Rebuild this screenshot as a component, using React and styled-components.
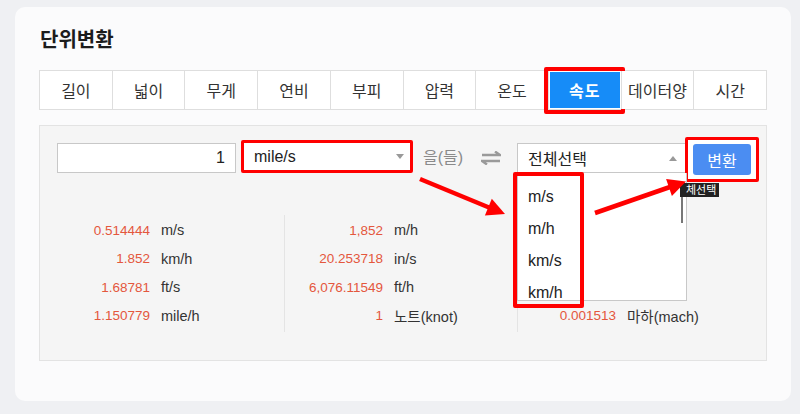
import styled, { createGlobalStyle } from "styled-components";

const tabs = ["길이", "넓이", "무게", "연비", "부피", "압력", "온도", "속도", "데이터양", "시간"];

// the third column's first rows sit under the open dropdown
const results = [
  [
    ["0.514444", "m/s"],
    ["1.852", "km/h"],
    ["1.68781", "ft/s"],
    ["1.150779", "mile/h"],
  ],
  [
    ["1,852", "m/h"],
    ["20.253718", "in/s"],
    ["6,076.11549", "ft/h"],
    ["1", "노트(knot)"],
  ],
  [
    ["", ""],
    ["", " "],
    ["", "  "],
    ["0.001513", "마하(mach)"],
  ],
];

const options = ["m/s", "m/h", "km/s", "km/h"];

const App = () => {
  return (
    <Page>
      <GlobalStyle />
      <Card>
        <Title>단위변환</Title>
        <TabRow>
          {tabs.map((t) => (
            <Tab key={t} $active={t === "속도"}>{t}</Tab>
          ))}
        </TabRow>

        <Panel>
          <ControlRow>
            <NumberInput readOnly value="1" />
            <SelectMark>
              <SelectText>mile/s</SelectText>
              <Caret />
            </SelectMark>
            <Josa>을(들)</Josa>
            <SwapIcon width="20" height="14" viewBox="0 0 20 14">
              <path d="M1 4 H19 L14 0.5" fill="none" stroke="#9a9a9a" strokeWidth="2.4" />
              <path d="M19 10 H1 L6 13.5" fill="none" stroke="#9a9a9a" strokeWidth="2.4" />
            </SwapIcon>
            <DropWrap>
              <TargetSelect>
                <SelectText>전체선택</SelectText>
                <Caret $up />
              </TargetSelect>
              <DropList>
                {options.map((o) => (
                  <DropItem key={o}>{o}</DropItem>
                ))}
                <ScrollThumb />
              </DropList>
              <ListMark />
              <Tip>체선택</Tip>
            </DropWrap>
            <ButtonMark>
              <ConvertButton>변환</ConvertButton>
            </ButtonMark>
          </ControlRow>

          <Results>
            {results.map((col, i) => (
              <Column key={i} $first={i === 0}>
                {col.map(([v, u]) => (
                  <ResultRow key={u}>
                    <Value>{v}</Value>
                    <Unit>{u}</Unit>
                  </ResultRow>
                ))}
              </Column>
            ))}
          </Results>

          <Arrows width="728" height="237" viewBox="0 0 728 237">
            <line x1="381" y1="54" x2="450" y2="82.5" stroke="#f00" strokeWidth="4.5" />
            <polygon points="466,89 445.9,90.5 452.8,73.8" fill="#f00" />
            <line x1="556" y1="88" x2="631" y2="62" stroke="#f00" strokeWidth="4.5" />
            <polygon points="647,56.5 632.9,70.9 627.1,53.9" fill="#f00" />
          </Arrows>
        </Panel>
      </Card>
    </Page>
  );
};

export default App;

const GlobalStyle = createGlobalStyle`
  body {
    margin: 0;
    background: #eff0f3;
    font-family: "Liberation Sans", "Noto Sans CJK KR", sans-serif;
  }
`;

const Page = styled.div`
  padding: 7px 0 13px 15px;
`;

const Card = styled.div`
  width: 776px;
  box-sizing: border-box;
  background: #fbfbfc;
  border-radius: 10px;
  padding: 19px 24px 40px;
`;

const Title = styled.h1`
  margin: 0;
  font-size: 20px;
  line-height: 28px;
  font-weight: bold;
  color: #1c1c1c;
  padding-left: 1px;
`;

const TabRow = styled.div`
  display: flex;
  margin-top: 16px;
  height: 40px;
  box-sizing: border-box;
  border: 1px solid #dedede;
  border-left: none;
  background: #fff;
`;

const Tab = styled.div`
  flex: 1;
  display: flex;
  align-items: center;
  justify-content: center;
  border-left: 1px solid #dedede;
  font-size: 16px;
  color: ${({ $active }) => ($active ? "#fff" : "#333")};
  font-weight: ${({ $active }) => ($active ? 600 : 400)};
  background: ${({ $active }) => ($active ? "#168cf8" : "#fff")};
  position: relative;
  letter-spacing: ${({ $active }) => ($active ? "1px" : "0")};

  ${({ $active }) =>
    $active &&
    `
    box-shadow: inset 0 0 0 1px #fff;
    &::after {
      content: "";
      position: absolute;
      top: -4px;
      bottom: -5px;
      left: -5px;
      right: -4px;
      border: 4px solid #f00;
      border-radius: 2px;
    }
  `}
`;

const Panel = styled.div`
  position: relative;
  margin-top: 15px;
  background: #f5f5f5;
  border: 1px solid #e3e3e3;
  padding: 11px 8px 28px 17px;
`;

const ControlRow = styled.div`
  display: flex;
  align-items: flex-end;

  & > * {
    flex-shrink: 0;
  }
`;

const NumberInput = styled.input`
  width: 179px;
  height: 30px;
  box-sizing: border-box;
  border: 1px solid #c8c8c8;
  background: #fff;
  text-align: right;
  padding: 0 10px;
  font-family: inherit;
  font-size: 16px;
  color: #222;
  outline: none;
`;

const SelectMark = styled.div`
  width: 172px;
  height: 33px;
  box-sizing: border-box;
  margin-left: 5px;
  border: 3px solid #f00;
  border-radius: 2px;
  background: #fff;
  display: flex;
  align-items: center;
  justify-content: space-between;
  padding: 0 6px 0 10px;
`;

const SelectText = styled.span`
  font-size: 16px;
  color: #222;
`;

const Caret = styled.span`
  width: 0;
  height: 0;
  border-left: 4.5px solid transparent;
  border-right: 4.5px solid transparent;
  ${({ $up }) => ($up ? "border-bottom: 5px solid #999;" : "border-top: 5px solid #999;")}
`;

const Josa = styled.span`
  width: 42px;
  margin-left: 10px;
  font-size: 16px;
  line-height: 30px;
  color: #8a8a8a;
  white-space: nowrap;
`;

const SwapIcon = styled.svg`
  margin-left: 16px;
  margin-bottom: 8px;
  display: block;
`;

const DropWrap = styled.div`
  position: relative;
  margin-left: 16px;
`;

const TargetSelect = styled.div`
  width: 169px;
  height: 30px;
  box-sizing: border-box;
  border: 1px solid #c8c8c8;
  background: #fff;
  display: flex;
  align-items: center;
  justify-content: space-between;
  padding: 0 8px 0 10px;
`;

const DropList = styled.div`
  position: absolute;
  top: 100%;
  left: 0;
  width: 170px;
  height: 128px;
  box-sizing: border-box;
  background: #fff;
  border: 1px solid #c8c8c8;
  border-top: none;
  overflow: hidden;
  padding-top: 8px;
  z-index: 2;
`;

const DropItem = styled.div`
  height: 32px;
  line-height: 32px;
  padding-left: 10px;
  font-size: 16px;
  color: #222;
`;

const ScrollThumb = styled.div`
  position: absolute;
  right: 3px;
  top: 12px;
  width: 2px;
  height: 38px;
  background: #777;
`;

const ListMark = styled.div`
  position: absolute;
  left: -4px;
  top: 29px;
  width: 71px;
  height: 136px;
  box-sizing: border-box;
  border: 4px solid #f00;
  border-radius: 2px;
  z-index: 3;
`;

const Tip = styled.div`
  position: absolute;
  left: 163px;
  top: 40px;
  background: #222;
  color: #fff;
  font-size: 11px;
  line-height: 14px;
  padding: 0 3px 0 6px;
  white-space: nowrap;
  z-index: 4;
`;

const ButtonMark = styled.div`
  margin-left: -1px;
  margin-bottom: -9px;
  border: 3px solid #f00;
  border-radius: 2px;
  padding: 4px 5px;
  background: #fff;
  position: relative;
  z-index: 1;
`;

const ConvertButton = styled.button`
  display: block;
  width: 58px;
  height: 31px;
  border: none;
  border-radius: 3px;
  background: #4b8df2;
  color: #fff;
  font-family: inherit;
  font-size: 16px;
  padding: 0;
`;

const Results = styled.div`
  display: grid;
  grid-template-columns: 232px 233px 233px;
  margin: 42px 0 0 -5px;
`;

const Column = styled.div`
  border-left: ${({ $first }) => ($first ? "none" : "1px solid #e4e4e4")};
  padding: 1px 0 2px;
`;

const ResultRow = styled.div`
  display: flex;
  align-items: center;
  height: 28.5px;
`;

const Value = styled.span`
  width: 98px;
  text-align: right;
  font-size: 13.5px;
  color: #e4573d;
`;

const Unit = styled.span`
  margin-left: 11px;
  font-size: 14.5px;
  color: #333;
  white-space: nowrap;
`;

const Arrows = styled.svg`
  position: absolute;
  top: -1px;
  left: -1px;
  pointer-events: none;
  overflow: visible;
  z-index: 5;
`;
